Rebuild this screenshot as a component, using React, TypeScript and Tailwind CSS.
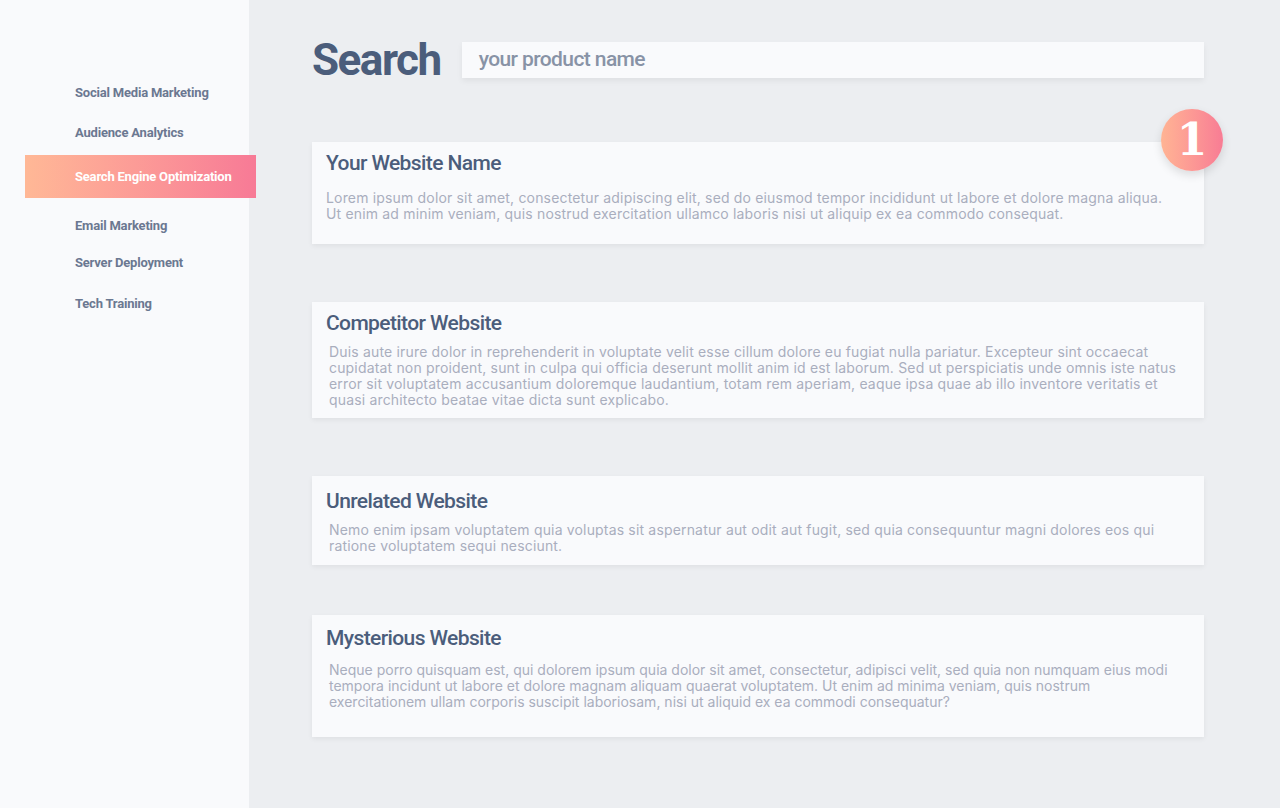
import React from 'react'

const navItems = [
  { label: 'Social Media Marketing', mt: 'mt-[84px]' },
  { label: 'Audience Analytics', mt: 'mt-[23px]' },
  { label: 'Search Engine Optimization', mt: 'mt-[14px]', active: true },
  { label: 'Email Marketing', mt: 'mt-[19px]' },
  { label: 'Server Deployment', mt: 'mt-[20px]' },
  { label: 'Tech Training', mt: 'mt-[24px]' },
]

const cards = [
  {
    title: 'Your Website Name',
    body: 'Lorem ipsum dolor sit amet, consectetur adipiscing elit, sed do eiusmod tempor incididunt ut labore et dolore magna aliqua. Ut enim ad minim veniam, quis nostrud exercitation ullamco laboris nisi ut aliquip ex ea commodo consequat.',
    cls: 'mt-[56px] h-[102px] pt-[8px]',
    bodyCls: 'mt-[14px] pr-[20px] tracking-[0.17px]',
    badge: true,
  },
  {
    title: 'Competitor Website',
    body: 'Duis aute irure dolor in reprehenderit in voluptate velit esse cillum dolore eu fugiat nulla pariatur. Excepteur sint occaecat cupidatat non proident, sunt in culpa qui officia deserunt mollit anim id est laborum. Sed ut perspiciatis unde omnis iste natus error sit voluptatem accusantium doloremque laudantium, totam rem aperiam, eaque ipsa quae ab illo inventore veritatis et quasi architecto beatae vitae dicta sunt explicabo.',
    cls: 'mt-[58px] h-[116px] pt-[8px]',
    bodyCls: 'mt-[8px] pl-[3px] tracking-[0.17px]',
  },
  {
    title: 'Unrelated Website',
    body: 'Nemo enim ipsam voluptatem quia voluptas sit aspernatur aut odit aut fugit, sed quia consequuntur magni dolores eos qui ratione voluptatem sequi nesciunt.',
    cls: 'mt-[58px] h-[89px] pt-[12px]',
    bodyCls: 'mt-[8px] pl-[3px] tracking-[0.17px]',
  },
  {
    title: 'Mysterious Website',
    body: 'Neque porro quisquam est, qui dolorem ipsum quia dolor sit amet, consectetur, adipisci velit, sed quia non numquam eius modi tempora incidunt ut labore et dolore magnam aliquam quaerat voluptatem. Ut enim ad minima veniam, quis nostrum exercitationem ullam corporis suscipit laboriosam, nisi ut aliquid ex ea commodi consequatur?',
    cls: 'mt-[50px] h-[122px] pt-[10px]',
    bodyCls: 'mt-[11px] pl-[3px]',
  },
]

const heading = "font-['Roboto',sans-serif]"

export default function App() {
  return (
    <div className="flex h-[808px] w-[1280px] overflow-hidden bg-[#eceef1]">
      <aside className="relative z-10 flex w-[249px] shrink-0 flex-col bg-[#f9fafc]">
        {navItems.map((item) => (
          <div
            key={item.label}
            className={`${item.mt} ${
              item.active
                ? 'ml-[25px] w-[231px] bg-gradient-to-r from-[#ffb896] to-[#f77a96] py-[13px] pl-[50px] text-white'
                : 'pl-[75px] text-[#6b7891]'
            } ${heading} whitespace-nowrap text-[13px] font-bold leading-[17px] tracking-[-0.2px]`}
          >
            {item.label}
          </div>
        ))}
      </aside>

      <main className="flex-1 pl-[63px] pr-[76px] pt-[34px]">
        <div className="flex items-center">
          <h1 className={`${heading} text-[44px] font-bold leading-[52px] tracking-[-1.5px] text-[#4b5d7b]`}>Search</h1>
          <div className="ml-[21px] flex h-[36px] flex-1 items-center bg-[#f9fafc] pl-[17px] shadow-[0_3px_6px_rgba(0,0,0,0.06)]">
            <span className={`${heading} text-[21px] font-medium tracking-[-0.6px] text-[#8893a6]`}>your product name</span>
          </div>
        </div>

        {cards.map((c) => (
          <div
            key={c.title}
            className={`relative ${c.cls} bg-[#f9fafc] px-[14px] shadow-[0_2px_5px_rgba(0,0,0,0.06)]`}
          >
            <h2 className={`${heading} text-[21px] font-medium leading-[26px] tracking-[-0.6px] text-[#4b5d7b]`}>{c.title}</h2>
            <p className={`${c.bodyCls} font-['Inter',sans-serif] text-[14px] leading-[16px] text-[#a9aebe]`}>{c.body}</p>
            {c.badge && (
              <div className="absolute right-[-19px] top-[-33px] flex h-[62px] w-[62px] items-center justify-center rounded-full bg-gradient-to-r from-[#ffb494] to-[#f87c94] shadow-[0_4px_10px_rgba(0,0,0,0.12)]">
                <span className="font-['DejaVu_Serif',serif] text-[44px] font-bold leading-none text-white">1</span>
              </div>
            )}
          </div>
        ))}
      </main>
    </div>
  )
}
